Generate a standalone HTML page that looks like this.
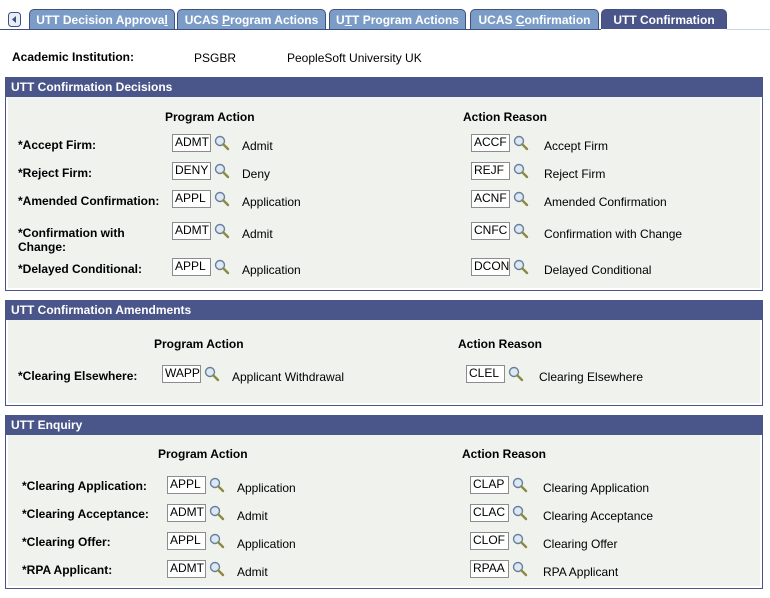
<!DOCTYPE html>
<html><head><style>
body{margin:0;width:770px;height:598px;background:#fff;font-family:"Liberation Sans",Arial,sans-serif;font-size:12px;color:#000;position:relative;overflow:hidden}
.a{position:absolute;white-space:nowrap}
.b{font-weight:bold}
.tab{position:absolute;top:9px;height:20px;background:#7c9cc8;color:#fff;font-weight:bold;font-size:12px;line-height:20px;text-align:center;border-radius:5px 5px 0 0;border:1px solid #3f4f80;border-bottom:none;box-sizing:border-box}
.box{position:absolute;left:5px;width:758px;border:1px solid #4a5689;background:#f0f2ee;box-sizing:border-box;box-shadow:inset 0 0 0 2px #fff}
.hd{position:absolute;left:0;top:0;right:0;height:19px;background:#4a5689;color:#fff;font-weight:bold;line-height:19px;padding-left:5px}
.in{position:absolute;width:39px;height:18px;border:1px solid #8c8c8c;background:#fff;box-sizing:border-box;font-size:12px;line-height:15px;padding-left:2px;overflow:hidden}
.mg{position:absolute;width:16px;height:16px}
</style></head><body>
<svg class="a" style="left:8px;top:12px" width="13" height="15"><rect x="0.5" y="0.5" width="12" height="14" rx="3" fill="#e8eef8" stroke="#3f4f80"/><path d="M8 4 L4 7.5 L8 11Z" fill="#3f4f80"/></svg>
<div class="tab" style="left:29px;width:146px">UTT Decision Approva<u>l</u></div>
<div class="tab" style="left:177px;width:149px">UCAS <u>P</u>rogram Actions</div>
<div class="tab" style="left:329px;width:137px">U<u>T</u>T Program Actions</div>
<div class="tab" style="left:470px;width:129px">UCAS <u>C</u>onfirmation</div>
<div class="tab" style="left:601px;width:126px;background:#4a5689">UTT Confirmation</div>
<div class="a" style="left:0;top:29px;width:601px;height:1px;background:#3f4f80"></div>
<div class="a" style="left:727px;top:29px;width:43px;height:1px;background:#c8d4e8"></div>
<div class="a b" style="left:12px;top:50px">Academic Institution:</div>
<div class="a" style="left:194px;top:51px">PSGBR</div>
<div class="a" style="left:287px;top:51px">PeopleSoft University UK</div>

<div class="box" style="top:77px;height:214px"><div class="hd">UTT Confirmation Decisions</div></div>
<div class="box" style="top:300px;height:106px"><div class="hd">UTT Confirmation Amendments</div></div>
<div class="box" style="top:415px;height:174px"><div class="hd">UTT Enquiry</div></div>

<svg width="0" height="0" style="position:absolute"><defs><g id="m"><circle cx="6" cy="6" r="4.5" fill="#dbe8f6" stroke="#6a7f99" stroke-width="1.4"/><path d="M9.3 9.3 L14 14" stroke="#8a8a40" stroke-width="2.4" stroke-linecap="round"/></g></defs></svg>

<div id="c"></div>
<script>
var h='';
function row(lx,ly,label,pix,pv,pd,rix,rv,rd,top){
h+='<div class="a b" style="left:'+lx+'px;top:'+ly+'px;line-height:14px">'+label+'</div>';
[[pix,pv,pd],[rix,rv,rd]].forEach(function(p){
h+='<div class="in" style="left:'+p[0]+'px;top:'+top+'px">'+p[1]+'</div>';
h+='<svg class="mg" style="left:'+(p[0]+42)+'px;top:'+(top+1)+'px"><use href="#m"/></svg>';
h+='<div class="a" style="left:'+(p[0]+70+(p[0]>400?3:0))+'px;top:'+(top+5)+'px">'+p[2]+'</div>';});
}
function hdr(px,rx,y){h+='<div class="a b" style="left:'+px+'px;top:'+y+'px">Program Action</div><div class="a b" style="left:'+rx+'px;top:'+y+'px">Action Reason</div>';}
hdr(165,463,110);
var r1=[["*Accept Firm:",134,"ADMT","Admit","ACCF","Accept Firm"],["*Reject Firm:",162,"DENY","Deny","REJF","Reject Firm"],["*Amended Confirmation:",190,"APPL","Application","ACNF","Amended Confirmation"],["*Confirmation with<br>Change:",222,"ADMT","Admit","CNFC","Confirmation with Change"],["*Delayed Conditional:",258,"APPL","Application","DCON","Delayed Conditional"]];
r1.forEach(function(r){row(18,r[1]+4,r[0],172,r[2],r[3],471,r[4],r[5],r[1]);});
hdr(154,458,337);
row(18,369,"*Clearing Elsewhere:",162,"WAPP","Applicant Withdrawal",466,"CLEL","Clearing Elsewhere",365);
hdr(158,462,447);
var r3=[["*Clearing Application:",476,"APPL","Application","CLAP","Clearing Application"],["*Clearing Acceptance:",504,"ADMT","Admit","CLAC","Clearing Acceptance"],["*Clearing Offer:",532,"APPL","Application","CLOF","Clearing Offer"],["*RPA Applicant:",560,"ADMT","Admit","RPAA","RPA Applicant"]];
r3.forEach(function(r){row(22,r[1]+3,r[0],167,r[2],r[3],470,r[4],r[5],r[1]);});
document.getElementById('c').innerHTML=h;
</script>
</body></html>
